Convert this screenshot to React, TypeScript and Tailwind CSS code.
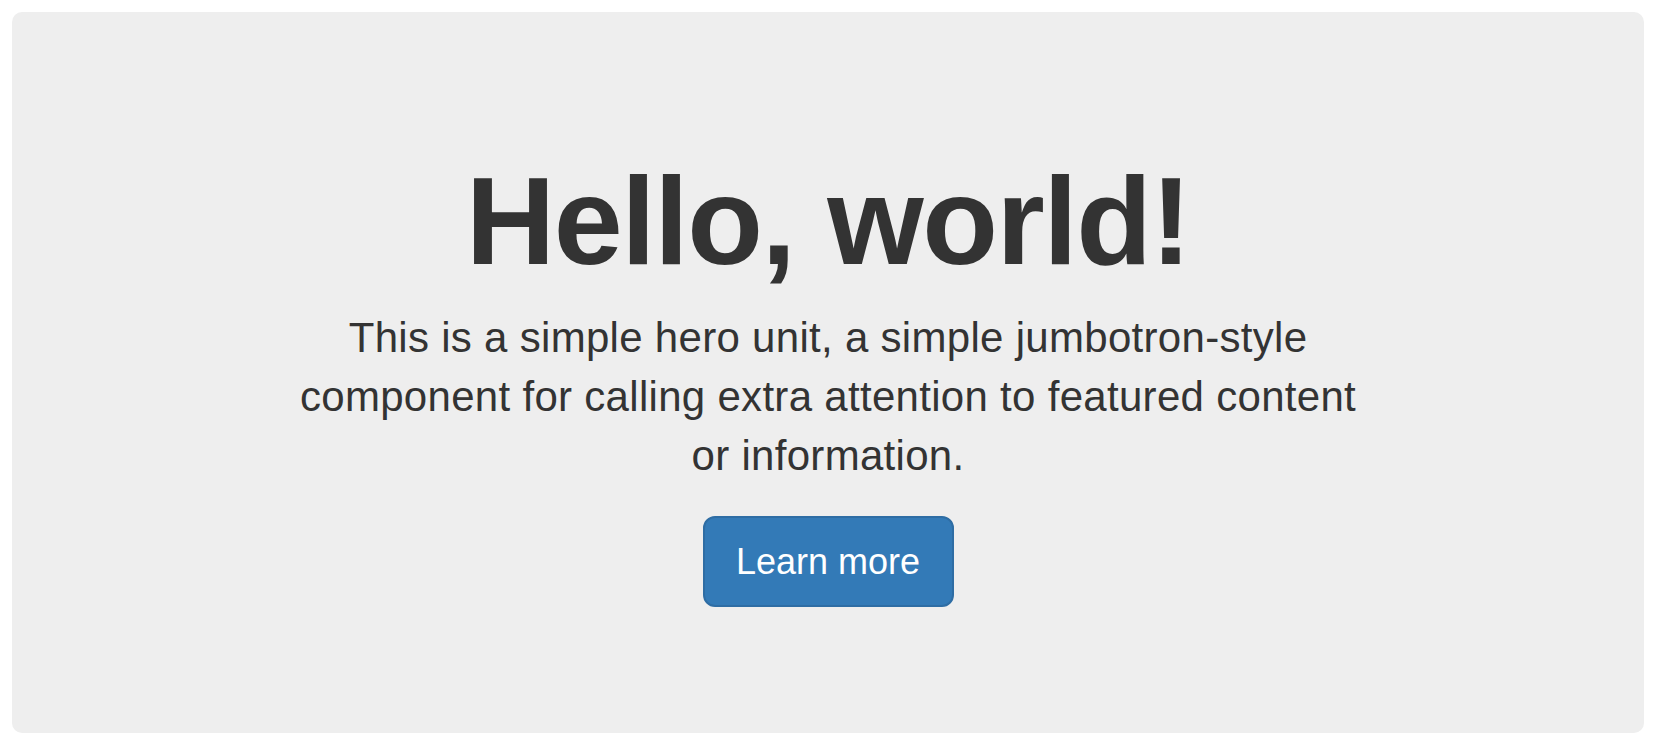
export default function App() {
  return (
    <div className="bg-white w-full min-h-[746px] pt-[12px] px-[12px]" style={{ fontFamily: '"Liberation Sans", Arial, Helvetica, sans-serif' }}>
      <div className="bg-[#eee] rounded-[10px] h-[721px] pt-[141px] flex flex-col items-center text-center text-[#333]">
        <h1 className="text-[124px] leading-[1.1] font-bold tracking-[-1.5px] mb-[19px]">Hello, world!</h1>
        <p className="text-[42px] leading-[59px] tracking-[0.3px]">
          This is a simple hero unit, a simple jumbotron-style
          <br />
          component for calling extra attention to featured content
          <br />
          or information.
        </p>
        <button
          type="button"
          className="mt-[31px] w-[251px] h-[91px] flex items-center justify-center bg-[#337ab7] border-2 border-[#2e6da4] rounded-[12px] text-white text-[36px] leading-none"
        >
          Learn more
        </button>
      </div>
    </div>
  );
}
